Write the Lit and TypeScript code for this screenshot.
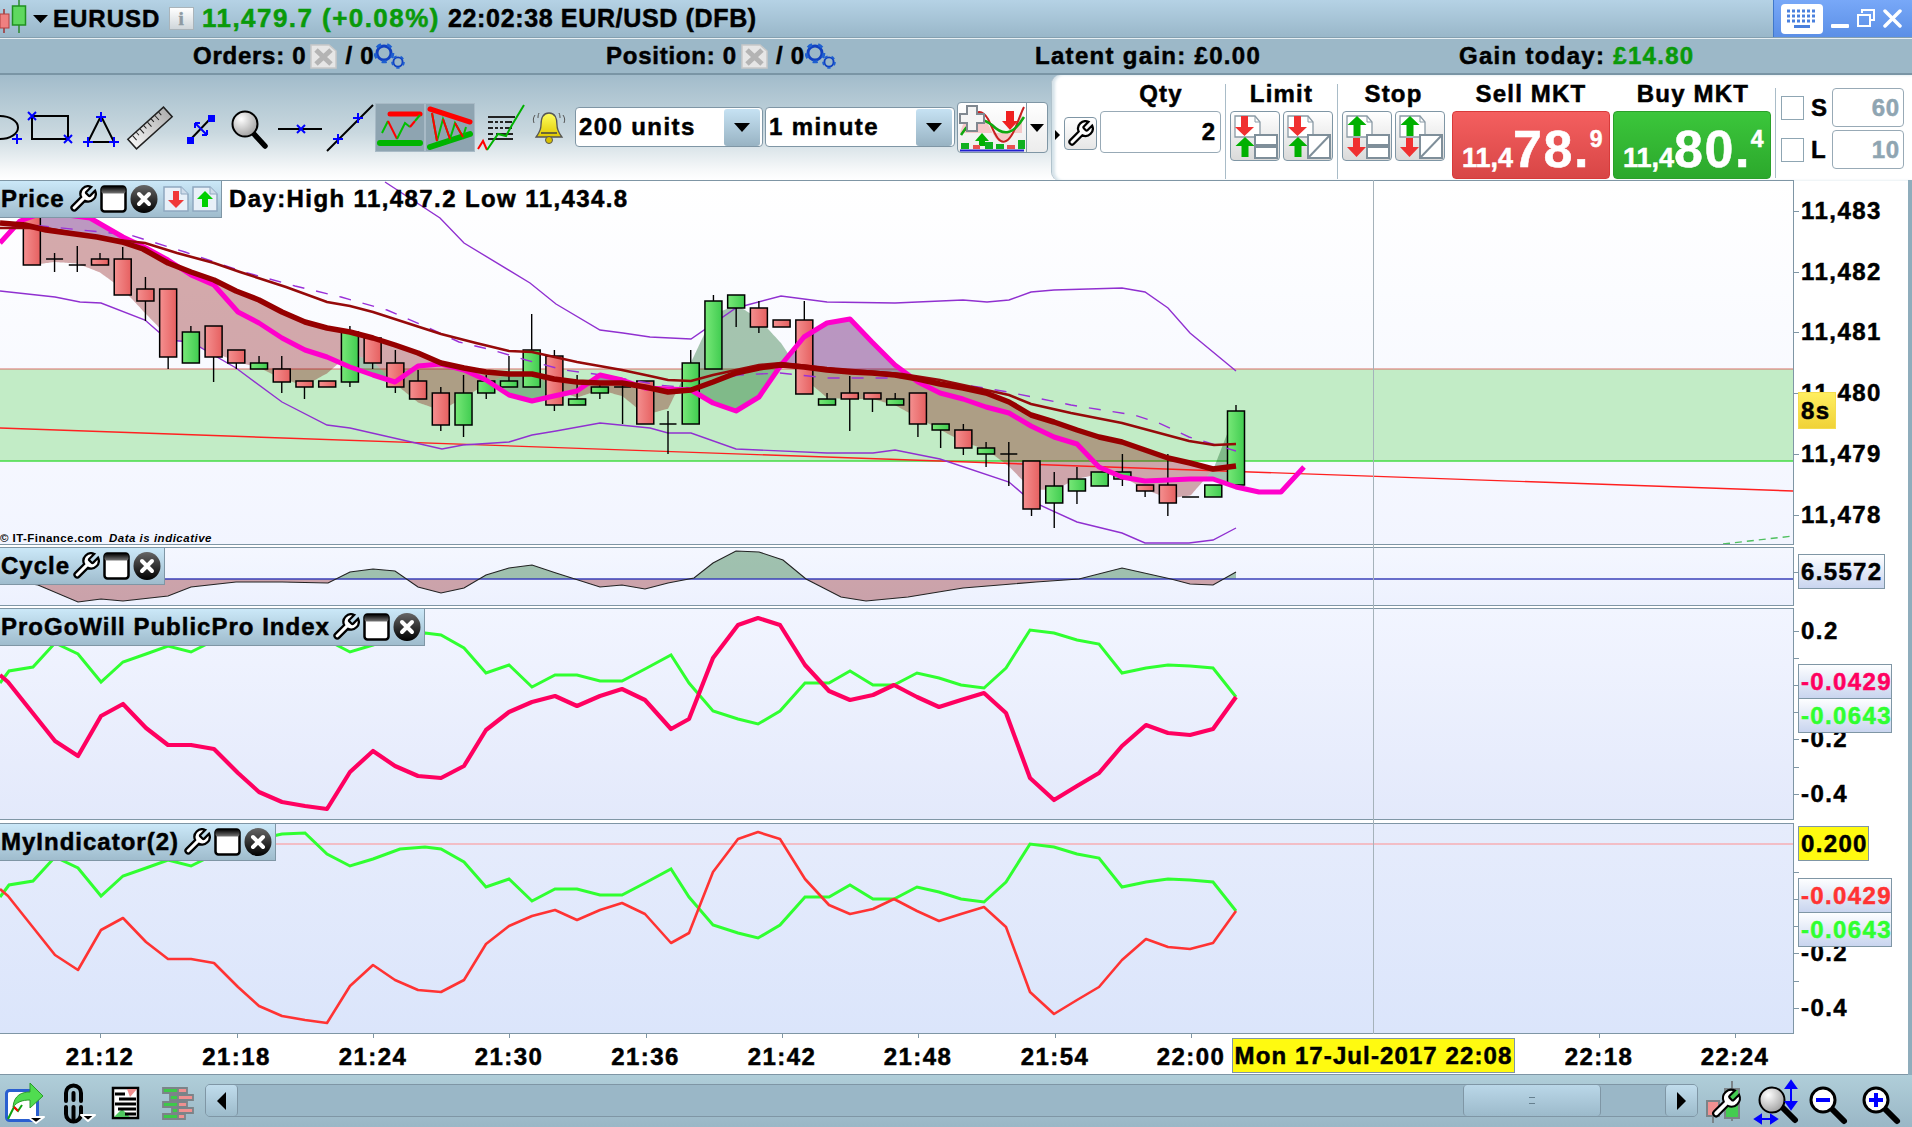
import { LitElement, html, svg, css } from "lit";
import { customElement } from "lit/decorators.js";

type P = [number, number];
const X = (k: number) => 100 + 22.72 * k;
// k, bodyTop, bodyBottom, wickTop, wickBottom, type (r red, g green, d doji)
const C: [number, number, number, number, number, string][] = [
  [-3, 200, 265, 200, 265, "r"], [-2, 259, 259, 253, 272, "d"], [-1, 265, 265, 246, 272, "d"], [0, 259, 265, 253, 265, "r"],
  [1, 259, 295, 247, 295, "r"], [2, 289, 301, 277, 321, "r"], [3, 289, 357, 289, 369, "r"], [4, 332, 363, 326, 363, "g"],
  [5, 326, 357, 326, 382, "r"], [6, 350, 363, 350, 369, "r"], [7, 363, 369, 356, 369, "g"], [8, 369, 382, 356, 393, "r"],
  [9, 381, 387, 381, 399, "r"], [10, 381, 387, 381, 387, "r"], [11, 332, 382, 326, 387, "g"], [12, 338, 363, 338, 369, "r"],
  [13, 363, 387, 350, 393, "r"], [14, 381, 399, 370, 399, "r"], [15, 393, 425, 387, 431, "r"], [16, 393, 425, 375, 437, "g"],
  [17, 381, 393, 375, 399, "g"], [18, 381, 387, 356, 387, "g"], [19, 350, 387, 314, 387, "g"], [20, 356, 405, 350, 411, "r"],
  [21, 399, 405, 375, 405, "g"], [22, 387, 393, 381, 399, "g"], [23, 387, 387, 381, 424, "d"], [24, 381, 424, 381, 424, "r"],
  [25, 424, 424, 411, 454, "d"], [26, 363, 424, 350, 424, "g"], [27, 301, 369, 295, 369, "g"], [28, 295, 308, 295, 327, "g"],
  [29, 308, 327, 301, 333, "r"], [30, 320, 327, 320, 327, "r"], [31, 320, 394, 301, 394, "r"], [32, 399, 405, 393, 405, "g"],
  [33, 393, 399, 376, 431, "r"], [34, 393, 399, 393, 412, "r"], [35, 399, 405, 393, 405, "g"], [36, 393, 424, 393, 437, "r"],
  [37, 424, 430, 424, 448, "g"], [38, 430, 448, 424, 455, "r"], [39, 448, 454, 442, 467, "g"], [40, 454, 454, 442, 486, "d"],
  [41, 461, 509, 461, 516, "r"], [42, 486, 503, 472, 528, "g"], [43, 479, 491, 467, 504, "g"], [44, 472, 486, 472, 486, "g"],
  [45, 472, 479, 454, 486, "g"], [46, 485, 491, 485, 497, "r"], [47, 485, 503, 454, 516, "r"], [48, 497, 497, 497, 497, "d"],
  [49, 485, 497, 485, 497, "g"], [50, 411, 485, 405, 485, "g"],
];
const MAG: P[] = [[0,243],[20,221],[45,212],[90,218],[123,237],[146,248],[168,260],[191,275],[214,285],[238,312],[259,323],[282,338],[305,350],[327,357],[350,367],[373,375],[395,382],[418,366],[441,364],[464,370],[486,380],[509,395],[532,401],[554,396],[577,391],[600,375],[622,380],[645,388],[668,389],[691,390],[713,403],[736,411],[759,397],[781,365],[804,337],[827,323],[850,319],[872,342],[895,365],[918,382],[940,393],[963,399],[986,407],[1009,413],[1031,426],[1054,437],[1077,444],[1099,467],[1122,477],[1145,481],[1168,480],[1190,479],[1213,479],[1236,487],[1259,492],[1281,492],[1304,467]];
const MAR: P[] = [[0,223],[25,225],[46,230],[97,237],[122,242],[143,249],[168,263],[191,272],[214,280],[236,291],[259,300],[282,312],[305,322],[327,328],[350,332],[373,338],[395,345],[418,353],[441,363],[464,368],[486,372],[509,374],[532,374],[554,379],[577,382],[600,383],[622,383],[645,387],[668,392],[691,390],[713,382],[736,373],[759,368],[781,365],[804,367],[827,370],[850,372],[872,373],[895,375],[918,379],[940,384],[963,388],[986,393],[1009,402],[1031,415],[1054,422],[1077,430],[1099,437],[1122,442],[1145,450],[1168,458],[1190,463],[1213,469],[1236,466]];
const THIN: P[] = [[0,228],[46,228],[101,238],[145,243],[177,253],[214,263],[240,272],[286,287],[327,302],[350,306],[373,312],[441,334],[476,343],[509,351],[532,352],[577,362],[622,370],[650,376],[668,380],[691,381],[713,375],[736,370],[759,365],[781,363],[827,368],[902,374],[940,380],[1009,395],[1031,404],[1071,413],[1122,423],[1189,441],[1214,445],[1236,444]];
const DASH: P[] = [[13,223],[130,235],[185,252],[244,272],[295,286],[341,297],[387,310],[429,328],[459,342],[492,350],[526,360],[564,370],[602,375],[648,383],[658,385],[692,388],[738,375],[780,373],[827,378],[881,378],[924,378],[978,387],[1008,392],[1071,405],[1134,415],[1159,423],[1189,437],[1236,451]];
const UP: P[] = [[385,182],[440,218],[464,243],[530,283],[556,304],[600,330],[623,333],[650,337],[691,339],[736,308],[781,296],[827,302],[895,303],[963,300],[987,302],[1009,300],[1031,292],[1054,290],[1122,288],[1145,292],[1168,308],[1190,333],[1236,371]];
const LOW: P[] = [[0,291],[55,297],[80,302],[101,303],[145,320],[168,340],[191,342],[236,368],[282,402],[327,425],[350,428],[442,449],[463,445],[509,442],[532,435],[556,431],[600,423],[650,428],[668,433],[691,433],[736,449],[827,453],[873,453],[895,450],[940,459],[1009,482],[1031,501],[1077,522],[1122,533],[1145,543],[1189,543],[1213,540],[1236,528]];
const CYC: P[] = [[0,579],[38,585],[78,602],[101,599],[123,601],[168,596],[191,587],[236,582],[282,582],[328,583],[350,572],[373,569],[395,571],[418,587],[441,593],[464,588],[486,575],[509,568],[532,565],[556,573],[600,587],[622,585],[645,589],[668,583],[694,578],[713,563],[736,551],[759,552],[783,560],[806,579],[841,597],[866,601],[908,597],[963,588],[1036,582],[1079,579],[1122,568],[1171,579],[1190,584],[1213,585],[1236,572]];
const PINK: P[] = [[0,675],[8,682],[55,741],[78,756],[101,716],[123,704],[146,728],[168,745],[191,745],[214,749],[238,773],[259,792],[282,802],[305,806],[327,809],[350,772],[373,751],[395,766],[418,776],[441,778],[464,766],[486,730],[509,712],[532,702],[555,696],[577,706],[600,696],[622,689],[645,700],[671,729],[689,719],[713,658],[738,625],[758,618],[780,625],[805,665],[829,691],[850,700],[873,695],[894,685],[917,697],[939,707],[961,700],[984,693],[1006,713],[1030,778],[1054,800],[1077,786],[1099,773],[1122,746],[1146,725],[1168,733],[1190,735],[1213,729],[1236,697]];
const LIME: P[] = [[0,683],[9,671],[33,667],[55,643],[78,654],[101,682],[123,662],[146,654],[168,646],[191,652],[215,640],[238,630],[259,625],[282,620],[305,619],[327,640],[350,652],[373,645],[400,635],[425,633],[441,635],[464,648],[486,673],[509,665],[532,687],[555,675],[577,675],[600,681],[622,681],[645,669],[671,655],[689,683],[713,711],[738,719],[758,724],[780,711],[805,683],[829,683],[850,671],[873,685],[894,685],[917,673],[939,678],[961,685],[984,688],[1006,668],[1030,630],[1054,633],[1077,640],[1099,644],[1122,673],[1146,668],[1168,665],[1190,666],[1213,668],[1236,697]];

const pts = (a: P[], dy = 0) => a.map((p) => `${p[0]},${p[1] + dy}`).join(" ");
const at = (a: P[], x: number) => {
  if (x <= a[0][0]) return a[0][1];
  for (let i = 1; i < a.length; i++) if (x <= a[i][0]) {
    const t = (x - a[i - 1][0]) / (a[i][0] - a[i - 1][0]);
    return a[i - 1][1] + t * (a[i][1] - a[i - 1][1]);
  }
  return a[a.length - 1][1];
};
const CLOSE: P[] = C.map((c) => [X(c[0]), c[5] === "r" ? c[2] : c[1]] as P);
const smooth = (a: P[]) => a.map((p, i) => [p[0], i === 0 || i === a.length - 1 ? p[1] : (a[i - 1][1] + 2 * p[1] + a[i + 1][1]) / 4] as P);
const CL = smooth(CLOSE);
const band = (x0: number, x1: number, a: (x: number) => number, b: (x: number) => number) => {
  const out: string[] = [];
  let top: string[] = [], bot: string[] = [];
  for (let x = x0; x <= x1 + 1; x += 1) {
    const ya = a(x), yb = b(x);
    if (x <= x1 && yb > ya) { top.push(`${x},${ya.toFixed(1)}`); bot.unshift(`${x},${yb.toFixed(1)}`); }
    else if (top.length) { out.push(top.concat(bot).join(" ")); top = []; bot = []; }
  }
  return out;
};
const mar = (x: number) => at(MAR, x), cl = (x: number) => at(CL, x), mg = (x: number) => at(MAG, x);
const RED = band(32, 1236, mar, cl);
const GRN = band(32, 1236, cl, mg);
const PUR = band(0, 1236, mg, mar);
const cycAbove = band(0, 1236, (x) => at(CYC, x), () => 579);
const cycBelow = band(0, 1236, () => 579, (x) => at(CYC, x));

const WP = "M14.7 6.3a1 1 0 0 0 0 1.4l1.6 1.6a1 1 0 0 0 1.4 0l3.77-3.77a6 6 0 0 1-7.94 7.94l-6.91 6.91a2.12 2.12 0 0 1-3-3l6.91-6.91a6 6 0 0 1 7.94-7.94l-3.76 3.76z";
const wrench = (s: number, fill = "#fff", stroke = "#000") => html`<svg width=${s} height=${s} viewBox="1 1 22 22"><path d=${WP} fill=${fill} stroke=${stroke} stroke-width="1.8"/></svg>`;
const win = html`<svg width="27" height="28" viewBox="0 0 27 28"><defs><linearGradient id="wg" x1="0" y1="0" x2="0" y2="1"><stop offset="0" stop-color="#000"/><stop offset="1" stop-color="#777"/></linearGradient></defs><rect x="1.5" y="1.5" width="24" height="25" rx="3" fill="#fff" stroke="#000" stroke-width="2.5"/><rect x="1.5" y="1.5" width="24" height="7" rx="2" fill="url(#wg)"/></svg>`;
const xc = html`<svg width="28" height="28" viewBox="0 0 28 28"><defs><linearGradient id="xg" x1="0" y1="0" x2="0" y2="1"><stop offset="0" stop-color="#666"/><stop offset="1" stop-color="#000"/></linearGradient></defs><ellipse cx="14" cy="14" rx="13.5" ry="14" fill="url(#xg)"/><path d="M9 9l10 10M19 9L9 19" stroke="#fff" stroke-width="4" stroke-linecap="round"/></svg>`;
const doc = (up: boolean) => html`<svg width="26" height="26" viewBox="0 0 26 26"><path d="M1 1h17l7 7v17H1z" fill="#e8f0f8" stroke="#8fa8c0" stroke-width="1.5"/><path d="M18 1v7h7" fill="#cfdcea" stroke="#8fa8c0"/>${up ? svg`<path d="M13 5l8 8h-5v8h-6v-8H5z" fill="#00d000"/>` : svg`<path d="M10 5h6v9h5l-8 8-8-8h5z" fill="#f03838"/>`}</svg>`;
const xdoc = html`<svg width="27" height="25" viewBox="0 0 27 25"><path d="M1 1h18l7 6v17H1z" fill="#e6e6e6" stroke="#c8c8c8" stroke-width="1.5"/><path d="M6 6l15 14M21 6L6 20" stroke="#b4b4b4" stroke-width="5"/></svg>`;
const gear = (cx: number, cy: number, r: number) => svg`<circle cx=${cx} cy=${cy} r=${r} fill="none" stroke="#1040c0" stroke-width=${r * 0.42}/><circle cx=${cx} cy=${cy} r=${r * 1.27} fill="none" stroke="#1e5fd0" stroke-width=${r * 0.42} stroke-dasharray=${`${r * 0.72} ${r * 0.88}`}/>`;
const gears = html`<svg width="33" height="27" viewBox="0 0 33 27">${gear(10, 10, 7)}${gear(24, 19, 4.6)}</svg>`;
const bx = (x: number, y: number, s = 4) => svg`<path d=${`M${x - s} ${y - s}L${x + s} ${y + s}M${x + s} ${y - s}L${x - s} ${y + s}`} stroke="#0000ff" stroke-width="2" fill="none"/>`;
const bp = (x: number, y: number, s = 5) => svg`<path d=${`M${x - s} ${y}H${x + s}M${x} ${y - s}V${y + s}`} stroke="#0000ff" stroke-width="2" fill="none"/>`;
const tool = (w: number, body: unknown) => html`<svg width=${w} height="50" viewBox=${`0 0 ${w} 50`}>${body}</svg>`;

const Tools = [
  tool(23, svg`<ellipse cx="0" cy="24.5" rx="18" ry="11.5" fill="none" stroke="#000" stroke-width="2"/>${bp(17, 36)}`),
  tool(54, svg`<rect x="9" y="13" width="36" height="23" fill="none" stroke="#000" stroke-width="2"/>${bx(9, 13)}${bx(45, 36)}`),
  tool(48, svg`<path d="M24 13L11 39H37Z" fill="none" stroke="#000" stroke-width="2"/>${bp(24, 14)}${bp(11, 39)}${bp(37, 39)}`),
  tool(50, svg`<defs><linearGradient id="rg"><stop offset="0" stop-color="#f4f4f4"/><stop offset="1" stop-color="#b0b0b0"/></linearGradient></defs><g transform="rotate(-42 25 25)"><rect x="1" y="18.5" width="48" height="13" fill="url(#rg)" stroke="#222" stroke-width="1.5"/><path d="M7 19v6M12 19v4M17 19v6M22 19v4M27 19v6M32 19v4M37 19v6M42 19v4" stroke="#222"/></g>`),
  tool(50, svg`<path d="M15 37L36 15" stroke="#000" stroke-width="2"/><rect x="12" y="34" width="7" height="7" fill="#0000ff"/><rect x="33" y="12" width="7" height="7" fill="#0000ff"/><path d="M20 20l12 12M20 20v5M20 20h5M32 32v-5M32 32h-5" stroke="#0000ff" stroke-width="2" fill="none"/>`),
  tool(48, svg`<defs><radialGradient id="lg" cx=".35" cy=".3" r=".8"><stop offset="0" stop-color="#fff"/><stop offset="1" stop-color="#999"/></radialGradient></defs><path d="M29 31L40 43" stroke="#000" stroke-width="5.5" stroke-linecap="round"/><circle cx="20" cy="21" r="12.5" fill="url(#lg)" stroke="#000" stroke-width="2"/>`),
  tool(52, svg`<path d="M5 26H49" stroke="#000" stroke-width="2"/>${bx(28, 26)}`),
  tool(50, svg`<path d="M2 48L48 2" stroke="#000" stroke-width="2"/>${bp(13, 36)}${bp(33, 15)}`),
  html`<div class="sel"><svg width="50" height="49" viewBox="0 0 50 49"><path d="M15 11H45" stroke="#f00" stroke-width="5" stroke-linecap="round"/><path d="M5 40H45" stroke="#00b400" stroke-width="6" stroke-linecap="round"/><path d="M7 30L13 18" stroke="#00c000" stroke-width="2" fill="none"/><path d="M13 18L22 36" stroke="#f00" stroke-width="2" fill="none"/><path d="M22 36L30 20L35 24" stroke="#00c000" stroke-width="2" fill="none"/><path d="M35 24L40 18" stroke="#f00" stroke-width="2"/><path d="M40 18L45 12" stroke="#00c000" stroke-width="2"/></svg></div>`,
  html`<div class="sel"><svg width="50" height="49" viewBox="0 0 50 49"><path d="M5 6L45 19" stroke="#f00" stroke-width="5" stroke-linecap="round"/><path d="M5 44L45 31" stroke="#00b400" stroke-width="6" stroke-linecap="round"/><path d="M7 10L12 38L18 16L25 36L30 20L38 34L41 24" stroke="#00c000" stroke-width="2" fill="none"/><path d="M7 10L12 38M18 16L25 36M30 20L38 34" stroke="#f00" stroke-width="2" fill="none"/></svg></div>`,
  tool(52, svg`<path d="M13 14H40M13 19h5m2 0h3m2 0h3m2 0h7M13 25h5m2 0h3m2 0h3m2 0h7M13 31h5m3 0h17M13 36H38" stroke="#222" stroke-width="2" fill="none"/><path d="M3 46L8 38L12 47" stroke="#f00" stroke-width="2" fill="none"/><path d="M12 47L23 31L31 33L37 22L49 2" stroke="#00b000" stroke-width="2" fill="none"/>`),
  tool(48, svg`<defs><linearGradient id="bg" x1="0" y1="0" x2="0" y2="1"><stop offset="0" stop-color="#ffff60"/><stop offset="1" stop-color="#e0c800"/></linearGradient></defs><path d="M22 10c-6 0-8 5-8 12 0 6-3 9-5 12h26c-2-3-5-6-5-12 0-7-2-12-8-12z" fill="url(#bg)" stroke="#555" stroke-width="1.3"/><path d="M14 30h16" stroke="#444" stroke-width="1.5"/><circle cx="22" cy="37" r="3.5" fill="#d8c000" stroke="#555"/><path d="M8 12c-2 3-2 5-1 8M12 10c-1 2-1 4-1 5M36 12c2 3 2 5 1 8M32 10c1 2 1 4 1 5" stroke="#555" fill="none"/>`),
];

const qbtn = (a: boolean, b: boolean) => html`<div class="qb"><svg width="48" height="47" viewBox="0 0 48 47">
  <path d="M4 3H24L29 9V24H4Z" fill="#fff" stroke="#8a9aa5" stroke-width="1.3"/><path d="M24 3V9H29" fill="none" stroke="#8a9aa5"/>
  ${a
    ? svg`<path d="M10 3h7v11h6l-9.500 9-9.500-9h6z" fill="#f03030"/><path d="M14 24l9.500 9h-6v11h-7V33h-6z" fill="#00b000"/>`
    : svg`<path d="M14 3l9.500 9h-6v11h-7V12h-6z" fill="#00b000"/><path d="M10 25h7v9h6l-9.500 10-9.500-10h6z" fill="#f03030"/>`}
  <rect x="24" y="22" width="22" height="23" fill="#fff" stroke="#7f8f9a" stroke-width="2"/>
  ${b ? svg`<rect x="24" y="31" width="22" height="4" fill="#7f8f9a"/>` : svg`<path d="M24 45L46 22" stroke="#7f8f9a" stroke-width="2"/>`}
</svg></div>`;

@customElement("app-root")
export class AppRoot extends LitElement {
  static styles = css`
    :host { display: block; width: 1912px; height: 1127px; overflow: hidden; background: #fff; font: 700 24px "Liberation Sans", Arial, sans-serif; color: #000; letter-spacing: .8px; -webkit-text-stroke: .5px currentColor; }
    svg { display: block; flex: none; }
    .title { height: 37px; display: flex; align-items: center; background: linear-gradient(#b5d2e5, #99b7c9); border-bottom: 1px solid #84a0b0; position: relative; }
    .dt { margin-left: 5px; }
    .sym { margin-left: 5px; font-size: 24px; letter-spacing: 1px; width: 116px; }
    .info { width: 25px; height: 23px; box-sizing: border-box; border: 1px solid #aab4ba; background: linear-gradient(#fff, #cfd6da); color: #8d9aa2; text-align: center; font: 700 19px/21px "Liberation Serif", serif; }
    .last { margin-left: 8px; color: #0a9a0a; font-size: 26px; letter-spacing: 1.45px; width: 246px; white-space: pre; }
    .time { letter-spacing: .65px; font-size: 25px; white-space: pre; }
    .winbox { margin-left: auto; width: 139px; height: 37px; background: linear-gradient(#78a8f8, #5b8fe6); border-left: 1px solid #3f78cc; box-sizing: border-box; display: flex; align-items: center; padding-left: 7px; gap: 8px; }
    .status { height: 34px; display: grid; grid-template-columns: 193px 413px 429px 424px 1fr; align-items: center; background: #9cb8c8; border-top: 1px solid #e6eef2; border-bottom: 2px solid #7a95a5; font-size: 24px; letter-spacing: .75px; white-space: pre; }
    .st { display: flex; align-items: center; }
    .st.wide { letter-spacing: 1.3px; }
    .st .xd { margin: 0 8px 0 4px; }
    .green { color: #0a9a0a; }
    .tools { height: 105px; display: flex; background: linear-gradient(#a2bccb, #c9d8df 55%, #f6f8f9 90%, #fff); }
    .left { display: grid; grid-template-columns: 23px 54px 48px 50px 50px 48px 52px 50px 50px 50px 52px 48px; padding-top: 27px; height: 51px; align-items: center; }
    .sel { width: 50px; height: 49px; background: #8ea4b1; box-shadow: inset 0 0 0 1px #a8bac6; }
    .drop { margin: 32px 0 0 0; width: 188px; height: 40px; box-sizing: border-box; background: #fff; border: 1px solid #7f96a5; border-radius: 4px; display: flex; align-items: center; padding: 0 2px 0 3px; letter-spacing: 1.4px; font-size: 24px; }
    .drop + .drop { margin-left: 2px; width: 190px; }
    .drop span { flex: 1; }
    .arr { width: 36px; height: 37px; border-radius: 3px; background: linear-gradient(#c6e2f3, #98b3c3); display: flex; align-items: center; justify-content: center; }
    .arr i { border: solid transparent; border-width: 9px 8px 0; border-top-color: #000; }
    .add { margin: 27px 0 0 2px; width: 91px; height: 51px; box-sizing: border-box; display: flex; background: linear-gradient(#fff, #ececec); border: 1px solid #7f96a5; border-radius: 4px; }
    .add .dd { flex: 1; border-left: 1px solid #7f96a5; display: flex; align-items: center; justify-content: center; }
    .add .dd i { border: solid transparent; border-width: 8px 7px 0; border-top-color: #000; }
    .trade { margin-left: 3px; flex: 1; background: #fff; border-radius: 9px 0 0 9px; border-left: 1px solid #b0c2cc; box-shadow: inset 3px 0 3px #d5e2e9; display: grid; grid-template-columns: 173px 112px 112px 162px 164px 1fr; height: 106px; font-size: 24px; }
    .g { border-left: 1px solid #a9bcc8; margin: 9px 0 7px; position: relative; display: flex; flex-direction: column; align-items: center; }
    .g.first { border: 0; flex-direction: row; flex-wrap: wrap; align-content: flex-start; padding-left: 3px; }
    .lab { height: 27px; line-height: 20px; text-align: center; letter-spacing: 1.2px; width: 100%; }
    .g.first .lab { padding-left: 42px; box-sizing: border-box; }
    .small { border: solid transparent; border-width: 5px 0 5px 5px; border-left-color: #000; margin: 5px 4px 0 0; }
    .wbtn { width: 33px; height: 33px; box-sizing: border-box; border: 1px solid #7f96a5; border-radius: 4px; background: linear-gradient(#fff, #e6e6e6); display: flex; align-items: center; justify-content: center; margin-top: 2px; }
    .qty { margin-left: 3px; width: 121px; height: 42px; box-sizing: border-box; border: 1px solid #98aab6; border-radius: 4px; text-align: right; padding: 0 4px; line-height: 40px; font-size: 24px; }
    .row { display: flex; gap: 3px; }
    .qb { width: 50px; height: 50px; box-sizing: border-box; border: 1px solid #7f96a5; border-radius: 4px; background: linear-gradient(#fff, #dadada); display: flex; align-items: center; justify-content: center; }
    .trade-side { border: 0; align-items: flex-start; padding-left: 3px; }
    .trade-side .lab { width: 158px; }
    .px { width: 158px; height: 68px; box-sizing: border-box; border-radius: 4px; color: #fff; display: flex; align-items: baseline; padding: 17px 0 0 9px; font-size: 27px; letter-spacing: 0; }
    .px.s { background: linear-gradient(#f45f5f, #d84646); border: 1px solid #d83a3a; }
    .px.b { margin-left: -1px; background: linear-gradient(#3bc63b, #2ca82c); border: 1px solid #2aa02a; }
    .px b { font-size: 52px; line-height: 40px; letter-spacing: 1.5px; }
    .px sup { font-size: 23px; line-height: 1; align-self: flex-start; margin: -1px 0 0 0; }
    .sl { border-left: 1px solid #a9bcc8; margin: 13px 0 0; display: grid; grid-template-columns: 24px 27px 72px; grid-auto-rows: 39px; gap: 3px 0; padding-left: 5px; align-items: center; height: 90px; font-size: 24px; }
    .sl .cb { width: 23px; height: 24px; box-sizing: border-box; border: 1px solid #8fa6b3; background: #fff; }
    .sl .nm { padding-left: 6px; }
    .sl .in { height: 39px; box-sizing: border-box; border: 1px solid #98aab6; border-radius: 4px; color: #8fa5b2; text-align: right; padding-right: 3px; line-height: 37px; }
    .chart { position: relative; border-right: 4px solid #8fadbc; height: 895px; overflow: hidden; }
    .pane { display: flex; }
    .plot { width: 1794px; box-sizing: border-box; border: solid #7f96a5; border-width: 1px 1px 1px 0; position: relative; flex: none; }
    .p1 { height: 365px; } .p1 .plot { background: linear-gradient(#fff, #f2f5ff); }
    .p2 { height: 59px; margin-top: 2px; } .p2 .plot { background: linear-gradient(#f4f7ff, #edf1fe); }
    .p3 { height: 212px; margin-top: 2px; } .p3 .plot { background: linear-gradient(#f2f5ff, #e3e9fb); }
    .p4 { height: 211px; margin-top: 3px; } .p4 .plot { background: linear-gradient(#e6ecfc, #dbe5fb); }
    .leg { position: absolute; left: 0; top: 0; height: 37px; box-sizing: border-box; display: flex; align-items: center; gap: 3px; background: linear-gradient(#cbe8f8, #9fbccd); border: solid #7f96a5; border-width: 0 1px 1px 0; padding: 0 3px 0 1px; white-space: pre; letter-spacing: 1px; }
    .leg .nm { margin-right: 1px; }
    .leg .nm.shrt { margin-right: -1px; }
    .leg .sp { margin-left: 2px; }
    .day { position: absolute; left: 229px; top: 4px; white-space: pre; letter-spacing: 1.4px; }
    .scale { position: relative; flex: 1; letter-spacing: 1.45px; }
    .sc { position: absolute; left: 7px; transform: translateY(-50%); line-height: 28px; white-space: pre; }
    .tk { position: absolute; left: 0; width: 5px; height: 1px; background: #7f96a5; }
    .tag { position: absolute; left: 4px; box-sizing: border-box; border: 1px solid #7f96a5; display: flex; align-items: center; padding-left: 2px; background: linear-gradient(#fdfeff, #c9d5ef); white-space: pre; letter-spacing: 1.35px; }
    .tag.y { background: #fffa10; border-color: #7f96a5; }
    .tag.g8 { background: linear-gradient(#ffee60, #f0d238); border-color: #f4dc50; }
    .axis { height: 40px; border-bottom: 1px solid #7f96a5; position: relative; letter-spacing: 1.45px; }
    .at { position: absolute; top: 9px; transform: translateX(-50%); line-height: 28px; }
    .atk { position: absolute; top: 0; width: 1px; height: 4px; background: #7f96a5; }
    .now { position: absolute; left: 1232px; top: 4px; width: 283px; height: 35px; box-sizing: border-box; background: #fffa10; border: 1px solid #7f96a5; text-align: center; line-height: 33px; white-space: pre; letter-spacing: 1.1px; }
    .cross { position: absolute; left: 1373px; top: 0; bottom: 41px; width: 1px; background: #a5b2ba; }
    .foot { height: 52px; background: linear-gradient(#b0ced9, #9ab7c6); display: grid; grid-template-columns: 48px 57px 48px 52px 1493px 5px 47px 51px 52px 52px; align-items: center; }
    .scroll { height: 33px; margin-top: -1px; box-sizing: border-box; border: 1px solid #7f96a5; border-radius: 5px; background: #9ab7c7; display: flex; }
    .sb { width: 31px; background: linear-gradient(#c0dcec, #9dbbcb); display: flex; align-items: center; justify-content: center; border-radius: 4px; }
    .sb.l { border-right: 1px solid #7f96a5; }
    .sb.r { border-left: 1px solid #7f96a5; margin-left: 64px; }
    .sb.l i { border: solid transparent; border-width: 9px 9px 9px 0; border-right-color: #000; }
    .sb.r i { border: solid transparent; border-width: 9px 0 9px 9px; border-left-color: #000; }
    .thumb { margin-left: 1225px; width: 140px; box-sizing: border-box; border: solid #7f96a5; border-width: 0 1px; background: linear-gradient(#bad7e8, #9cbacb); display: flex; align-items: center; justify-content: center; border-radius: 4px; }
    .thumb i { width: 6px; height: 5px; border: solid #66808f; border-width: 1px 0; }
  `;

  private sc(y: number, top: number, t: string) {
    return html`<span class="sc" style=${`top:${y - top}px`}>${t}</span><i class="tk" style=${`top:${y - top}px`}></i>`;
  }
  private minor(y: number, top: number) {
    return html`<i class="tk" style=${`top:${y - top}px`}></i>`;
  }
  private tag(cls: string, y0: number, y1: number, w: number, color: string, t: string, top: number) {
    return html`<span class="tag ${cls}" style=${`top:${y0 - top}px;height:${y1 - y0}px;width:${w}px;color:${color}`}>${t}</span>`;
  }
  private legend(name: string, docs = false, shrt = false) {
    return html`<div class="leg"><span class="nm ${shrt ? "shrt" : ""}">${name}</span>${wrench(28)}${win}${xc}${docs ? html`<span class="sp">${doc(false)}</span>${doc(true)}` : ""}</div>`;
  }

  private candles() {
    return C.map(([k, t, b, wt, wb, ty]) => {
      const x = X(k);
      return svg`<path d=${`M${x} ${wt}V${wb}`} stroke="#000" stroke-width="1.4"/>${ty === "d"
        ? svg`<path d=${`M${x - 8.5} ${t}H${x + 8.5}`} stroke="#000" stroke-width="1.5"/>`
        : svg`<rect x=${x - 8.5} y=${t} width="17" height=${b - t} fill=${ty === "r" ? "url(#cr)" : "url(#cg)"} stroke="#000" stroke-width="1.5"/>`}`;
    });
  }

  private price() {
    return html`<svg width="1793" height="363" viewBox="0 181 1793 363">
      <defs>
        <linearGradient id="cr"><stop offset="0" stop-color="#f49090"/><stop offset="1" stop-color="#e66060"/></linearGradient>
        <linearGradient id="cg"><stop offset="0" stop-color="#78e878"/><stop offset="1" stop-color="#40cc50"/></linearGradient>
      </defs>
      <rect x="0" y="369" width="1793" height="92" fill="#c2ecc6"/>
      <path d="M0 369H1793" stroke="#d87068" stroke-width="1.2"/>
      <path d="M0 461H1793" stroke="#44dc44" stroke-width="1.5"/>
      ${RED.map((p) => svg`<polygon points=${p} fill="rgba(130,0,0,.33)"/>`)}
      ${GRN.map((p) => svg`<polygon points=${p} fill="rgba(0,90,20,.34)"/>`)}
      ${PUR.map((p) => svg`<polygon points=${p} fill="rgba(90,0,100,.4)"/>`)}
      <path d="M0 428L1793 491" stroke="#ff2020" stroke-width="1.4" fill="none"/>
      <polyline points=${pts(UP)} fill="none" stroke="#9030d0" stroke-width="1.4"/>
      <polyline points=${pts(LOW)} fill="none" stroke="#9030d0" stroke-width="1.4"/>
      ${this.candles()}
      <polyline points=${pts(DASH)} fill="none" stroke="#9a30d8" stroke-width="1.4" stroke-dasharray="12 12"/>
      <polyline points=${pts(MAG)} fill="none" stroke="#ff00cc" stroke-width="5" stroke-linejoin="round"/>
      <polyline points=${pts(THIN)} fill="none" stroke="#960a0a" stroke-width="2.6"/>
      <polyline points=${pts(MAR)} fill="none" stroke="#960000" stroke-width="5.5" stroke-linejoin="round"/>
      <path d="M1723 544L1793 536" stroke="#50c060" stroke-width="1.4" stroke-dasharray="7 5" fill="none"/>
      <text x="0" y="542" font-size="11.5" letter-spacing=".45" font-weight="700" font-family="Liberation Sans" stroke="none">© IT-Finance.com</text>
      <text x="109" y="542" font-size="11.5" letter-spacing=".5" font-weight="700" font-style="italic" font-family="Liberation Sans" stroke="none">Data is indicative</text>
    </svg>`;
  }

  private cycle() {
    return html`<svg width="1793" height="57" viewBox="0 548 1793 57">
      ${cycAbove.map((p) => svg`<polygon points=${p} fill="rgba(0,90,20,.34)"/>`)}
      ${cycBelow.map((p) => svg`<polygon points=${p} fill="rgba(130,0,0,.33)"/>`)}
      <path d="M0 579H1793" stroke="#3a40b8" stroke-width="1.3"/>
      <polyline points=${pts(CYC)} fill="none" stroke="#222" stroke-width="1.1"/>
    </svg>`;
  }

  private ind(top: number, h: number, dy: number, color: string, w: number, ref: boolean) {
    return html`<svg width="1793" height=${h} viewBox=${`0 ${top} 1793 ${h}`}>
      ${ref ? svg`<path d="M0 844H1793" stroke="#ff9090" stroke-width="1.2"/>` : ""}
      <polyline points=${pts(LIME, dy)} fill="none" stroke="#30ff30" stroke-width="3"/>
      <polyline points=${pts(PINK, dy)} fill="none" stroke=${color} stroke-width=${w} stroke-linejoin="round"/>
    </svg>`;
  }

  render() {
    const times: [string, number][] = [["21:12", 100], ["21:18", 236.5], ["21:24", 373], ["21:30", 509], ["21:36", 645.5], ["21:42", 782], ["21:48", 918], ["21:54", 1055], ["22:00", 1191], ["22:18", 1599], ["22:24", 1735]];
    return html`
      <div class="title">
        <svg width="28" height="37" viewBox="0 0 28 37"><path d="M19 0V33" stroke="#2a8a2a" stroke-width="1.5"/><path d="M4 9V33" stroke="#a03030" stroke-width="1.5"/><rect x="0" y="14" width="9" height="14" fill="#ef8080" stroke="#b04040"/><rect x="12.5" y="6" width="13" height="19" fill="#5fd85f" stroke="#209020" stroke-width="1.5"/></svg>
        <svg width="15" height="8" viewBox="0 0 15 8" class="dt"><path d="M0 0H15L7.5 8Z"/></svg>
        <span class="sym">EURUSD</span>
        <span class="info">i</span>
        <span class="last">11,479.7 (+0.08%)</span>
        <span class="time">22:02:38 EUR/USD (DFB)</span>
        <div class="winbox">
          <svg width="42" height="30" viewBox="0 0 42 30"><rect width="42" height="30" rx="4" fill="#fff"/><path d="M6 7h30M6 12h30M6 17h30" stroke="#4a80dd" stroke-width="3" stroke-dasharray="3 2"/><rect x="13" y="21" width="16" height="3" fill="#4a80dd"/></svg>
          <svg width="18" height="20" viewBox="0 0 18 20"><rect y="15" width="18" height="4" rx="1" fill="#fff"/></svg>
          <svg width="18" height="19" viewBox="0 0 18 19"><path d="M5 4V1H17V11H13M1 6H13V17H1Z" fill="none" stroke="#fff" stroke-width="2"/></svg>
          <svg width="19" height="19" viewBox="0 0 19 19"><path d="M2 2L17 17M17 2L2 17" stroke="#fff" stroke-width="3.5" stroke-linecap="round"/></svg>
        </div>
      </div>
      <div class="status">
        <span></span>
        <span class="st">Orders: 0<span class="xd">${xdoc}</span>/ 0${gears}</span>
        <span class="st">Position: 0<span class="xd">${xdoc}</span>/ 0${gears}</span>
        <span class="st wide">Latent gain: £0.00</span>
        <span class="st wide">Gain today: <span class="green">£14.80</span></span>
      </div>
      <div class="tools">
        <div class="left">${Tools}</div>
        <div class="drop"><span>200 units</span><div class="arr"><i></i></div></div>
        <div class="drop"><span>1 minute</span><div class="arr"><i></i></div></div>
        <div class="add">
          <svg width="68" height="49" viewBox="0 0 68 49">
            <path d="M2 30C10 5 16 5 24 12C34 24 36 40 44 38C54 36 60 20 64 6V30H2Z" fill="#f6c8c8"/>
            <path d="M8 28C16 4 24 6 30 16C36 28 40 42 48 38C56 34 60 16 66 4" fill="none" stroke="#c82020" stroke-width="2"/>
            <path d="M3 32C14 14 24 14 34 22C44 32 54 34 66 14" fill="none" stroke="#10a810" stroke-width="2.5"/>
            <path d="M2 11H9V3H19V11H26V20H19V28H9V20H2Z" fill="#f4f4f4" stroke="#808890" stroke-width="2"/>
            <path d="M48 8H56V18H60L52 27L44 18H48Z" fill="#f02020"/>
            <path d="M24 30L31 38H27V43H21V38H17Z" fill="#00b000"/>
            <path d="M3 40h8v6H3zM27 39h8v7h-8zM38 41h8v5h-8zM60 37h7v9h-7z" fill="#10b020"/>
            <path d="M15 42h7v4h-7zM49 42h8v4h-8z" fill="#e85050"/>
            <path d="M2 47.5H66" stroke="#2020d0" stroke-width="2"/>
          </svg>
          <div class="dd"><i></i></div>
        </div>
        <div class="trade">
          <div class="g first">
            <div class="lab">Qty</div>
            <i class="small"></i>
            <div class="wbtn">${wrench(27)}</div>
            <div class="qty">2</div>
          </div>
          <div class="g"><div class="lab">Limit</div><div class="row">${qbtn(true, true)}${qbtn(true, false)}</div></div>
          <div class="g"><div class="lab">Stop</div><div class="row">${qbtn(false, true)}${qbtn(false, false)}</div></div>
          <div class="g trade-side"><div class="lab">Sell MKT</div><div class="px s">11,4<b>78.</b><sup>9</sup></div></div>
          <div class="g trade-side"><div class="lab">Buy MKT</div><div class="px b">11,4<b>80.</b><sup>4</sup></div></div>
          <div class="sl">
            <span class="cb"></span><span class="nm">S</span><span class="in">60</span>
            <span class="cb"></span><span class="nm">L</span><span class="in">10</span>
          </div>
        </div>
      </div>
      <div class="chart">
        <div class="pane p1">
          <div class="plot">${this.price()}${this.legend("Price", true)}
            <div class="day">Day:High 11,487.2 Low 11,434.8</div>
          </div>
          <div class="scale">
            ${this.sc(211, 180, "11,483")}${this.sc(272, 180, "11,482")}${this.sc(332, 180, "11,481")}${this.sc(393, 180, "11,480")}${this.sc(454, 180, "11,479")}${this.sc(515, 180, "11,478")}
            ${this.tag("g8", 392, 429, 38, "#000", "8s", 180)}
          </div>
        </div>
        <div class="pane p2">
          <div class="plot">${this.cycle()}${this.legend("Cycle", false, true)}</div>
          <div class="scale">${this.minor(572, 547)}${this.tag("", 554, 589, 87, "#000", "6.5572", 547)}</div>
        </div>
        <div class="pane p3">
          <div class="plot">${this.ind(609, 210, 0, "#ff0060", 4.2, false)}${this.legend("ProGoWill PublicPro Index", false, true)}</div>
          <div class="scale">
            ${this.sc(631, 608, "0.2")}${this.minor(658, 608)}${this.minor(685, 608)}${this.minor(712, 608)}${this.sc(739, 608, "-0.2")}${this.minor(767, 608)}${this.sc(794, 608, "-0.4")}
            ${this.tag("", 664, 699, 94, "#ff0060", "-0.0429", 608)}${this.tag("", 698, 733, 94, "#30ff30", "-0.0643", 608)}
          </div>
        </div>
        <div class="pane p4">
          <div class="plot">${this.ind(824, 209, 214, "#ff3333", 2.6, true)}${this.legend("MyIndicator(2)")}</div>
          <div class="scale">
            ${this.minor(872, 823)}${this.minor(899, 823)}${this.minor(926, 823)}${this.sc(953, 823, "-0.2")}${this.minor(981, 823)}${this.sc(1008, 823, "-0.4")}
            ${this.tag("y", 826, 861, 71, "#000", "0.200", 823)}
            ${this.tag("", 878, 913, 94, "#ff3333", "-0.0429", 823)}${this.tag("", 912, 947, 94, "#30ff30", "-0.0643", 823)}
          </div>
        </div>
        <div class="axis">
          ${times.map(([t, x]) => html`<i class="atk" style=${`left:${x}px`}></i><span class="at" style=${`left:${x}px`}>${t}</span>`)}
          <div class="now">Mon 17-Jul-2017 22:08</div>
        </div>
        <div class="cross"></div>
      </div>
      <div class="foot">
        <svg width="48" height="52" viewBox="0 0 48 52">
          <rect x="6.5" y="15.5" width="31" height="30" rx="3" fill="#fff" stroke="#2a5fd0" stroke-width="3"/>
          <path d="M8 44L14 32L18 36L22 30" stroke="#10a010" stroke-width="2" fill="none"/><path d="M14 32L18 36" stroke="#f00" stroke-width="2"/>
          <path d="M13 32C14 20 22 17 30 17V8L43 21L30 33V25C22 25 17 27 13 32Z" fill="#50dc50" stroke="#2a9a2a"/>
          <path d="M28 42H44L36 48Z" stroke="#fff" stroke-width="2" stroke-linejoin="round"/>
        </svg>
        <svg width="57" height="52" viewBox="0 0 57 52">
          <path d="M18 26V18a7.5 7.5 0 0 1 15 0V26" fill="none" stroke="#000" stroke-width="4" stroke-linecap="round"/>
          <path d="M25.5 18V25" stroke="#000" stroke-width="4" stroke-linecap="round"/>
          <path d="M18 32V39a7.5 7.5 0 0 0 15 0V32" fill="none" stroke="#000" stroke-width="4" stroke-linecap="round"/>
          <path d="M25.5 32V44" stroke="#000" stroke-width="4" stroke-linecap="round"/>
          <path d="M33 40H47L40 46Z" stroke="#fff" stroke-width="2" stroke-linejoin="round"/>
        </svg>
        <svg width="48" height="52" viewBox="0 0 48 52">
          <rect x="8" y="13" width="25" height="30" fill="#fff" stroke="#000" stroke-width="2.5"/>
          <path d="M22 14H32L25 22Z" fill="#f09090"/>
          <path d="M9 42l8-8 8 8z" fill="#50c860"/>
          <path d="M10 19L20 19M14 24L31 24M10 29L31 29M13 34L31 34M20 39L31 39" stroke="#000" stroke-width="3"/>
        </svg>
        <svg width="52" height="52" viewBox="0 0 52 52">
          <g stroke="#7b8388" stroke-width="1.8">
            <path d="M10 13h15v5H10zM17 20h8v5h-8zM10 27h15v5H10zM19 33h6v5h-6zM10 39h15v5H10z" fill="#3ec84a"/>
            <path d="M25 13h9v5h-9zM25 20h15v5H25zM25 27h9v5h-9zM25 33h15v5H25zM25 39h7v5h-7z" fill="#f09090"/>
          </g>
        </svg>
        <div class="scroll">
          <div class="sb l"><i></i></div>
          <div class="thumb"><i></i></div>
          <div class="sb r"><i></i></div>
        </div>
        <span></span>
        <svg width="47" height="52" viewBox="0 0 47 52">
          <path d="M10 28V48M29 6V46" stroke="#7b8388" stroke-width="2"/>
          <rect x="4" y="26" width="12" height="15" fill="#f09090" stroke="#7b8388" stroke-width="2"/>
          <rect x="22" y="14" width="14" height="29" fill="#44cc50" stroke="#7b8388" stroke-width="2"/>
          <g transform="translate(6 12) scale(1.4)"><path d=${WP} fill="#fff" stroke="#000" stroke-width="1.5"/></g>
        </svg>
        <svg width="51" height="52" viewBox="0 0 51 52">
          <defs><radialGradient id="lg2" cx=".35" cy=".3" r=".8"><stop offset="0" stop-color="#fff"/><stop offset="1" stop-color="#999"/></radialGradient></defs>
          <path d="M32 32L45 45" stroke="#000" stroke-width="6" stroke-linecap="round"/>
          <circle cx="22" cy="25" r="12.5" fill="url(#lg2)" stroke="#000" stroke-width="2"/>
          <path d="M41 9V31M41 6l-5 7h10zM41 34l-5-7h10z" fill="#0000ff" stroke="#0000ff" stroke-width="2"/>
          <path d="M8 44H24M5 44l6-4v8zM27 44l-6-4v8z" fill="#0000ff" stroke="#0000ff" stroke-width="2"/>
        </svg>
        <svg width="52" height="52" viewBox="0 0 52 52">
          <path d="M30 33L43 46" stroke="#000" stroke-width="6" stroke-linecap="round"/>
          <circle cx="22" cy="25" r="12" fill="#fff" stroke="#000" stroke-width="3"/>
          <path d="M15 25H29" stroke="#0000ff" stroke-width="4"/>
        </svg>
        <svg width="52" height="52" viewBox="0 0 52 52">
          <path d="M31 33L44 46" stroke="#000" stroke-width="6" stroke-linecap="round"/>
          <circle cx="23" cy="25" r="12" fill="#fff" stroke="#000" stroke-width="3"/>
          <path d="M16 25H30M23 18V32" stroke="#0000ff" stroke-width="4"/>
        </svg>
      </div>
    `;
  }
}
